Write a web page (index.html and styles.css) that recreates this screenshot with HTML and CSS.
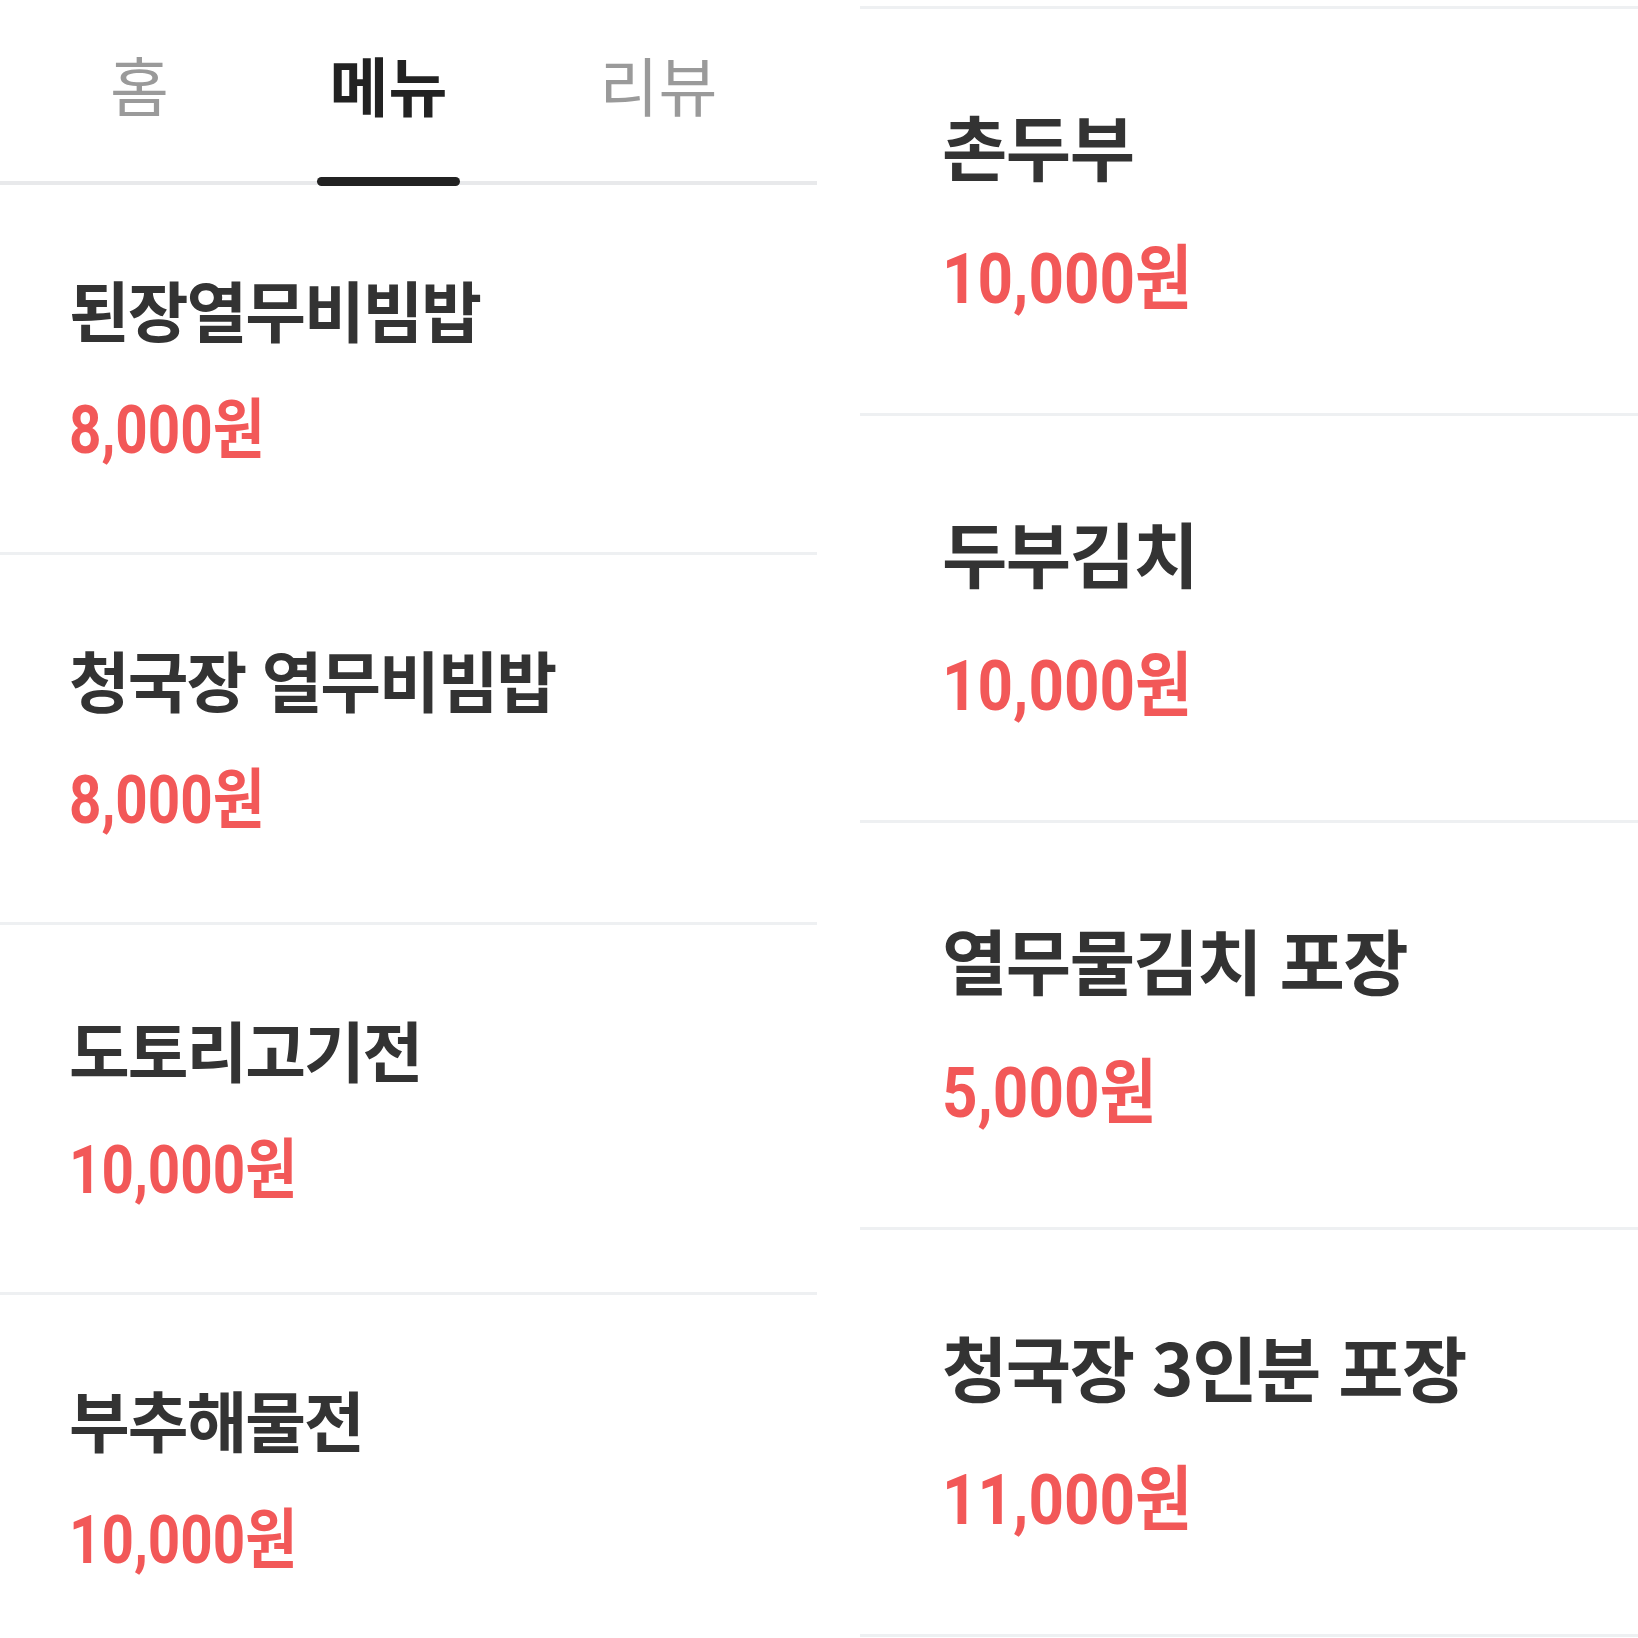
FILE: index.html
```html
<!DOCTYPE html>
<html lang="ko">
<head>
<meta charset="utf-8">
<title>메뉴</title>
<link rel="stylesheet" href="styles.css">
</head>
<body>
<div class="page">
  <section class="col col-left">
    <nav class="tabs">
      <div class="tab">홈</div>
      <div class="tab active">메뉴</div>
      <div class="tab">리뷰</div>
    </nav>
    <ul class="menu">
      <li class="item"><div class="name">된장열무비빔밥</div><div class="price">8,000원</div></li>
      <li class="item"><div class="name">청국장 열무비빔밥</div><div class="price">8,000원</div></li>
      <li class="item"><div class="name">도토리고기전</div><div class="price">10,000원</div></li>
      <li class="item"><div class="name">부추해물전</div><div class="price">10,000원</div></li>
    </ul>
  </section>
  <section class="col col-right">
    <ul class="menu">
      <li class="item"><div class="name">촌두부</div><div class="price">10,000원</div></li>
      <li class="item"><div class="name">두부김치</div><div class="price">10,000원</div></li>
      <li class="item"><div class="name">열무물김치 포장</div><div class="price">5,000원</div></li>
      <li class="item"><div class="name">청국장 3인분 포장</div><div class="price">11,000원</div></li>
    </ul>
  </section>
</div>
</body>
</html>
```

FILE: styles.css
```css
html, body {
  margin: 0;
  padding: 0;
  background: #ffffff;
}

body {
  font-family: "Noto Sans CJK KR", sans-serif;
}

.page {
  display: flex;
  width: 1638px;
  height: 1638px;
  overflow: hidden;
}

.col-left {
  width: 817px;
  flex: none;
}

.col-right {
  width: 778px;
  margin-left: 43px;
  padding-top: 6px;
  flex: none;
}

/* Tabs */
.tabs {
  display: flex;
  height: 181px;
  border-bottom: 4px solid #e8e9eb;
}

.tab {
  position: relative;
  width: 143px;
  box-sizing: border-box;
  padding-top: 51px;
  text-align: center;
  font-size: 64px;
  line-height: 64px;
  letter-spacing: 0;
  color: #9a9a9a;
  font-weight: 400;
}

.tab:nth-child(1) { margin-left: 68px; }
.tab:nth-child(2) { margin-left: 106px; }
.tab:nth-child(3) { margin-left: 127px; }

.tab.active {
  color: #222222;
  font-weight: 700;
}

.tab.active::after {
  content: "";
  position: absolute;
  left: 0;
  right: 0;
  bottom: -5px;
  height: 9px;
  border-radius: 5px;
  background: #222222;
}

/* Menu list */
.menu {
  list-style: none;
  margin: 0;
  padding: 0;
}

.col-right .menu {
  border-top: 3px solid #eef0f2;
}

.item {
  border-bottom: 3px solid #eef0f2;
  overflow: hidden;
}

.col-left .item {
  height: 367px;
}

.col-right .item {
  height: 404px;
}

.name {
  white-space: nowrap;
  font-weight: 700;
  color: #333333;
}

.price {
  white-space: nowrap;
  font-family: Roboto, "Noto Sans CJK KR", sans-serif;
  font-weight: 700;
  color: #f25858;
  transform-origin: left center;
}

.col-left .name {
  margin-left: 69px;
  padding-top: 90px;
  font-size: 66px;
  line-height: 66px;
  letter-spacing: -2px;
}

.col-left .price {
  margin-left: 69px;
  margin-top: 57px;
  font-size: 66px;
  line-height: 66px;
  transform: scaleX(0.857);
}

.col-right .name {
  margin-left: 82px;
  padding-top: 100px;
  font-size: 71px;
  line-height: 71px;
  letter-spacing: -1.5px;
}

.col-right .price {
  margin-left: 82px;
  margin-top: 63px;
  font-size: 71px;
  line-height: 71px;
  transform: scaleX(0.873);
}
```
